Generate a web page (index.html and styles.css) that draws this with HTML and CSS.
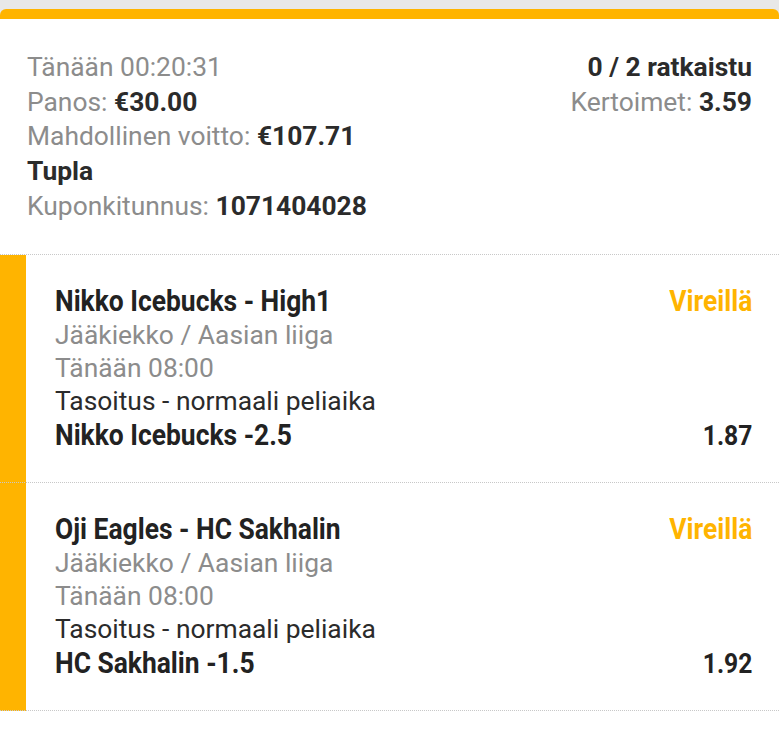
FILE: index.html
```html
<!DOCTYPE html>
<html lang="fi">
  <head>
    <meta charset="UTF-8" />
    <meta name="viewport" content="width=device-width, initial-scale=1.0" />
    <title>Kuponki</title>
    <link rel="stylesheet" href="styles.css">
  </head>
  <body>
    <div class="coupon">
      <!-- Coupon summary -->
      <div class="summary">
        <div class="summary-left">
          <div class="line muted">Tänään 00:20:31</div>
          <div class="line muted">Panos: <b>€30.00</b></div>
          <div class="line muted">Mahdollinen voitto: <b>€107.71</b></div>
          <div class="line"><b>Tupla</b></div>
          <div class="line muted">Kuponkitunnus: <b>1071404028</b></div>
        </div>
        <div class="summary-right">
          <div class="line"><b>0 / 2 ratkaistu</b></div>
          <div class="line muted">Kertoimet: <b>3.59</b></div>
        </div>
      </div>

      <!-- Bets -->
      <div class="bets">
        <div class="bet">
          <div class="bet-row title-row">
            <span class="cond bet-title">Nikko Icebucks - High1</span>
            <span class="cond right bet-status">Vireillä</span>
          </div>
          <div class="line muted">Jääkiekko / Aasian liiga</div>
          <div class="line muted">Tänään 08:00</div>
          <div class="line">Tasoitus - normaali peliaika</div>
          <div class="bet-row">
            <span class="cond strong">Nikko Icebucks -2.5</span>
            <span class="cond right strong odds">1.87</span>
          </div>
        </div>
        <div class="bet">
          <div class="bet-row title-row">
            <span class="cond bet-title">Oji Eagles - HC Sakhalin</span>
            <span class="cond right bet-status">Vireillä</span>
          </div>
          <div class="line muted">Jääkiekko / Aasian liiga</div>
          <div class="line muted">Tänään 08:00</div>
          <div class="line">Tasoitus - normaali peliaika</div>
          <div class="bet-row">
            <span class="cond strong">HC Sakhalin -1.5</span>
            <span class="cond right strong odds">1.92</span>
          </div>
        </div>
      </div>
    </div>
  </body>
</html>
```

FILE: styles.css
```css
/* Basic reset and styling */
body {
  margin: 0;
  font-family: Roboto, "Liberation Sans", sans-serif;
  background-color: #e8e8e8;
  color: #2b2b2b;
}

.coupon {
  margin-top: 9px;
  background-color: #fff;
  border-top: 10px solid #ffb400;
  border-radius: 6px 6px 0 0;
  min-height: 731px;
}

.line {
  font-size: 26.4px;
  line-height: 34.7px;
  color: #2b2b2b;
}

.line b {
  color: #2b2b2b;
}

.muted {
  color: #8c8c8c;
}

.summary {
  display: flex;
  justify-content: space-between;
  padding: 31px 27px 30px 27px;
}

.summary-right {
  text-align: right;
}

/* Bet list with the orange bar on the left */
.bets {
  border-top: 1px dotted #c8c8c8;
}

.bet {
  background: linear-gradient(to right, #ffb400 26px, #fff 26px);
  border-bottom: 1px dotted #c8c8c8;
  padding: 28px 27px 30px 55px;
}

.bet .line {
  line-height: 33px;
}

.bet-row {
  display: flex;
  justify-content: space-between;
  align-items: baseline;
  line-height: 33px;
}

.title-row {
  line-height: 36px;
}

/* Condensed look, Roboto Condensed is not available */
.cond {
  display: inline-block;
  font-size: 30px;
  transform: scaleX(0.88);
  transform-origin: left center;
}

.cond.right {
  transform-origin: right center;
}

.bet-title {
  font-weight: bold;
  color: #222;
}

.bet-status {
  font-weight: bold;
  color: #ffb400;
}

.strong {
  font-weight: bold;
  color: #222;
}

.odds {
  font-size: 28px;
}
```
